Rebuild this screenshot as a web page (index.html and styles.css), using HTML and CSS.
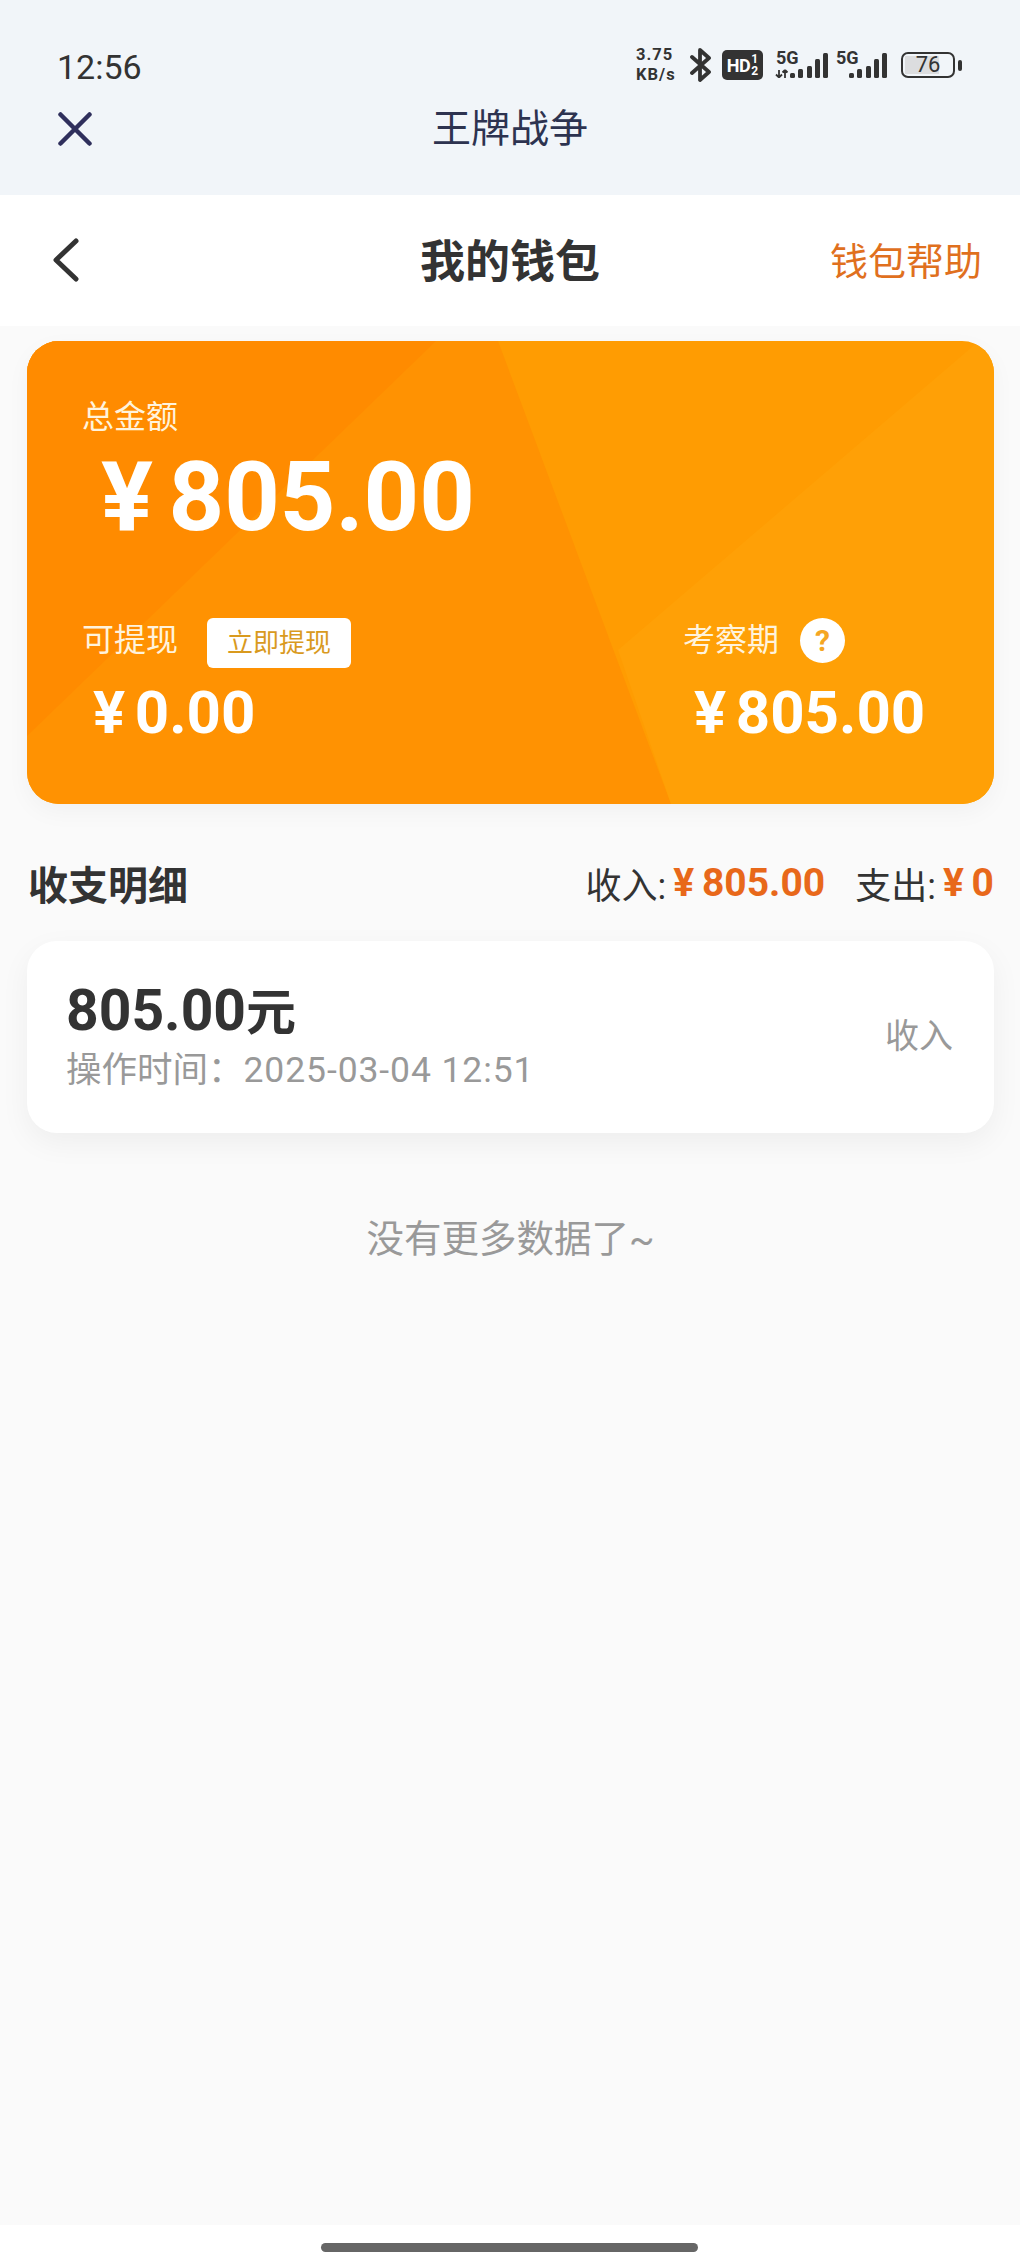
FILE: index.html
```html
<!DOCTYPE html>
<html lang="zh-CN">
<head>
	<meta charset="UTF-8">
	<title>我的钱包</title>
	<link rel="stylesheet" href="styles.css">
</head>
<body>
	<div class="top">
		<div class="status">
			<span class="time">12:56</span>
			<div class="status_icons">
				<div class="speed">3.75<br>KB/s</div>
				<svg class="bt" width="22" height="36" viewBox="0 0 22 36"><path d="M2 10 L19 25 L10 33 V3 L19 11 L2 26" fill="none" stroke="#333" stroke-width="3.8" stroke-linejoin="round" stroke-linecap="round"/></svg>
				<div class="hd"><span class="hd_txt">HD</span><span class="hd_num"><i>1</i><i>2</i></span></div>
				<div class="net">
					<span class="net_txt">5G</span>
					<svg width="53" height="26" viewBox="0 0 53 26"><path d="M4 18v8M1 22.5l3 3M7 22.5l-3 3M10 18v8M7.5 20.5l2.5-2.5M12.5 20.5l-2.5-2.5" stroke="#333" stroke-width="1.8" fill="none"/><rect x="15" y="21" width="5" height="5" rx="1.5" fill="#333"/><rect x="23" y="17" width="5" height="9" rx="1.5" fill="#333"/><rect x="32" y="14" width="5" height="12" rx="1.5" fill="#333"/><rect x="40" y="7" width="5" height="19" rx="1.5" fill="#333"/><rect x="48" y="1" width="5" height="25" rx="1.5" fill="#333"/></svg>
				</div>
				<div class="net net2">
					<span class="net_txt">5G</span>
					<svg width="52" height="26" viewBox="0 0 52 26"><rect x="14" y="21" width="5" height="5" rx="1.5" fill="#333"/><rect x="22" y="17" width="5" height="9" rx="1.5" fill="#333"/><rect x="31" y="14" width="5" height="12" rx="1.5" fill="#333"/><rect x="39" y="7" width="5" height="19" rx="1.5" fill="#333"/><rect x="47" y="1" width="5" height="25" rx="1.5" fill="#333"/></svg>
				</div>
				<div class="battery"><div class="battery_body"><div class="battery_fill"></div><span>76</span></div><div class="battery_tip"></div></div>
			</div>
		</div>
		<div class="winbar">
			<svg width="34" height="34" viewBox="0 0 34 34"><path d="M2.5 2.5 L31.5 31.5 M31.5 2.5 L2.5 31.5" stroke="#2f2f5c" stroke-width="4.5" stroke-linecap="round"/></svg>
			<span class="win_title">王牌战争</span>
		</div>
	</div>

	<div class="nav">
		<svg class="nav_back" width="28" height="44" viewBox="0 0 28 44"><path d="M24 3 L4 22 L24 41" fill="none" stroke="#333" stroke-width="5" stroke-linecap="round" stroke-linejoin="round"/></svg>
		<span class="nav_title">我的钱包</span>
		<span class="nav_help">钱包帮助</span>
	</div>

	<div class="page">
		<div class="wallet">
			<svg class="wallet_bg" viewBox="0 0 967 463" preserveAspectRatio="none">
				<rect width="967" height="463" fill="#ff9c02"/>
				<polygon points="0,0 471,0 644,463 0,463" fill="#ff9202"/>
				<polygon points="0,0 409,0 0,395" fill="#ff8b00"/>
				<polygon points="952,0 591,309 644,463 967,463 967,0" fill="#ffa006"/>
			</svg>
			<div class="wallet_label">总金额</div>
			<div class="wallet_total"><span class="yen">¥</span>805.00</div>
			<div class="wallet_row">
				<div class="stat">
					<div class="stat_head"><span class="wallet_label">可提现</span><span class="withdraw">立即提现</span></div>
					<div class="stat_value"><span class="yen">¥</span>0.00</div>
				</div>
				<div class="stat stat_right">
					<div class="stat_head"><span class="wallet_label">考察期</span><span class="help">?</span></div>
					<div class="stat_value"><span class="yen">¥</span>805.00</div>
				</div>
			</div>
		</div>

		<div class="detail_head">
			<span class="detail_title">收支明细</span>
			<div class="detail_sum">
				<span>收入:</span><b><span class="yen">¥</span>805.00</b>
				<span class="sum_gap">支出:</span><b><span class="yen">¥</span>0</b>
			</div>
		</div>

		<div class="record">
			<div>
				<div class="record_amount">805.00<span class="record_unit">元</span></div>
				<div class="record_time">操作时间：<span class="record_date">2025-03-04 12:51</span></div>
			</div>
			<span class="record_type">收入</span>
		</div>

		<div class="no_more">没有更多数据了~</div>
	</div>

	<div class="home"><div class="home_bar"></div></div>
</body>
</html>
```

FILE: styles.css
```css
html,body{
	margin:0;
	padding:0;
}
body{
	width:1020px;
	height:2267px;
	display:flex;
	flex-direction:column;
	background:#fafafa;
	font-family:"Roboto","Noto Sans CJK SC",sans-serif;
	color:#333;
	overflow:hidden;
}
.top{
	height:195px;
	background:#f1f5f9;
}
.status{
	height:70px;
	padding:30px 58px 0;
	display:flex;
	justify-content:space-between;
	align-items:center;
}
.time{
	margin:3px 0 0 -1px;
	font-size:34px;
	line-height:40px;
	color:#333;
}
.status_icons{
	display:flex;
	align-items:center;
}
.speed{
	font-size:16.5px;
	line-height:20px;
	letter-spacing:1px;
	font-weight:700;
	width:54px;
}
.hd{
	margin-left:10px;
	width:41px;
	height:30px;
	border-radius:5px;
	background:#333;
	color:#fff;
	display:flex;
	align-items:center;
	justify-content:center;
	font-weight:700;
}
.hd_txt{
	font-size:18px;
	letter-spacing:-.5px;
}
.hd_num{
	display:flex;
	flex-direction:column;
	margin-left:1px;
}
.hd_num i{
	font-style:normal;
	font-size:12px;
	line-height:12px;
}
.net{
	position:relative;
	width:53px;
	height:26px;
	margin-left:12px;
}
.net2{
	width:52px;
	margin-left:7px;
}
.net svg{
	position:absolute;
	left:0;
	top:0;
}
.net_txt{
	position:absolute;
	left:1px;
	top:-2px;
	font-size:18px;
	line-height:16px;
	font-weight:700;
}
.battery{
	display:flex;
	align-items:center;
	margin-left:14px;
}
.battery_body{
	position:relative;
	width:54px;
	height:26px;
	box-sizing:border-box;
	border:2.5px solid #333;
	border-radius:7px;
	text-align:center;
	font-size:22px;
	line-height:21px;
}
.battery_body span{
	position:relative;
}
.battery_fill{
	position:absolute;
	left:2px;
	top:2px;
	bottom:2px;
	width:34px;
	background:#dcdddf;
}
.battery_tip{
	width:4px;
	height:11px;
	margin-left:3px;
	background:#333;
	border-radius:2px;
}
.winbar{
	height:58px;
	padding:0 58px;
	position:relative;
	display:flex;
	align-items:center;
}
.win_title{
	position:absolute;
	left:0;
	right:0;
	text-align:center;
	font-size:39px;
	line-height:58px;
	color:#2d3350;
}
.nav{
	height:131px;
	box-sizing:border-box;
	background:#fff;
	padding:0 38px 4px 52px;
	position:relative;
	display:flex;
	align-items:center;
	justify-content:space-between;
}
.nav_back{
	margin-top:3px;
}
.nav_title{
	position:absolute;
	left:0;
	right:0;
	text-align:center;
	font-size:45px;
	font-weight:700;
	color:#333;
}
.nav_help{
	font-size:38px;
	color:#e0701e;
}
.page{
	flex:1;
	padding:15px 26px 0 27px;
}
.wallet{
	height:463px;
	box-sizing:border-box;
	padding:56px 61px 0 55px;
	border-radius:32px;
	position:relative;
	overflow:hidden;
	color:#fff;
	box-shadow:0 8px 24px rgba(0,0,0,.04);
}
.wallet > *{
	position:relative;
}
.wallet .wallet_bg{
	position:absolute;
	left:0;
	top:0;
	width:100%;
	height:100%;
}
.wallet_label{
	font-size:32px;
	line-height:40px;
	color:#fff3dc;
}
.wallet_total{
	margin:10px 0 0 19px;
	font-size:97px;
	line-height:100px;
	font-weight:700;
}
.yen{
	margin-right:.16em;
}
.wallet_row{
	display:flex;
	justify-content:space-between;
	margin-top:68px;
}
.stat_right{
	width:250px;
}
.stat_head{
	height:53px;
	display:flex;
	align-items:flex-start;
}
.stat_head .wallet_label{
	line-height:50px;
}
.withdraw{
	margin:3px 0 0 29px;
	width:144px;
	height:50px;
	background:#fff;
	border-radius:6px;
	color:#d99a1e;
	font-size:26px;
	line-height:50px;
	text-align:center;
}
.help{
	margin:3px 0 0 21px;
	width:45px;
	height:45px;
	border-radius:50%;
	background:#fff;
	color:#f5a623;
	font-size:30px;
	font-weight:700;
	line-height:45px;
	text-align:center;
}
.stat_value{
	margin:10px 0 0 11px;
	font-size:60px;
	line-height:70px;
	font-weight:700;
}
.detail_head{
	margin-top:54px;
	padding-left:1px;
	display:flex;
	justify-content:space-between;
	align-items:center;
	height:50px;
}
.detail_title{
	font-size:40px;
	font-weight:700;
}
.detail_sum{
	font-size:36px;
	display:flex;
	align-items:center;
}
.detail_sum b{
	color:#e8681a;
	font-size:39px;
	font-weight:700;
	margin-left:7px;
}
.detail_sum .yen{
	margin-right:.2em;
}
.sum_gap{
	margin-left:30px;
}
.record{
	margin-top:33px;
	height:192px;
	box-sizing:border-box;
	padding:40px 41px 0 39px;
	border-radius:30px;
	background:#fff;
	box-shadow:0 10px 30px rgba(0,0,0,.05);
	position:relative;
	display:flex;
	justify-content:space-between;
}
.record_amount{
	font-size:57px;
	line-height:60px;
	font-weight:700;
	color:#333;
}
.record_unit{
	font-size:50px;
}
.record_time{
	margin-top:7px;
	font-size:35.5px;
	line-height:40px;
	color:#999;
}
.record_date{
	letter-spacing:.9px;
}
.record_type{
	font-size:34px;
	line-height:40px;
	color:#999;
	margin-top:35px;
}
.no_more{
	margin-top:81px;
	text-align:center;
	font-size:37.5px;
	line-height:50px;
	color:#999;
}
.home{
	height:42px;
	background:#fff;
	padding-top:18px;
	box-sizing:border-box;
}
.home_bar{
	width:377px;
	height:9px;
	margin-left:321px;
	border-radius:5px;
	background:#666;
}
```
